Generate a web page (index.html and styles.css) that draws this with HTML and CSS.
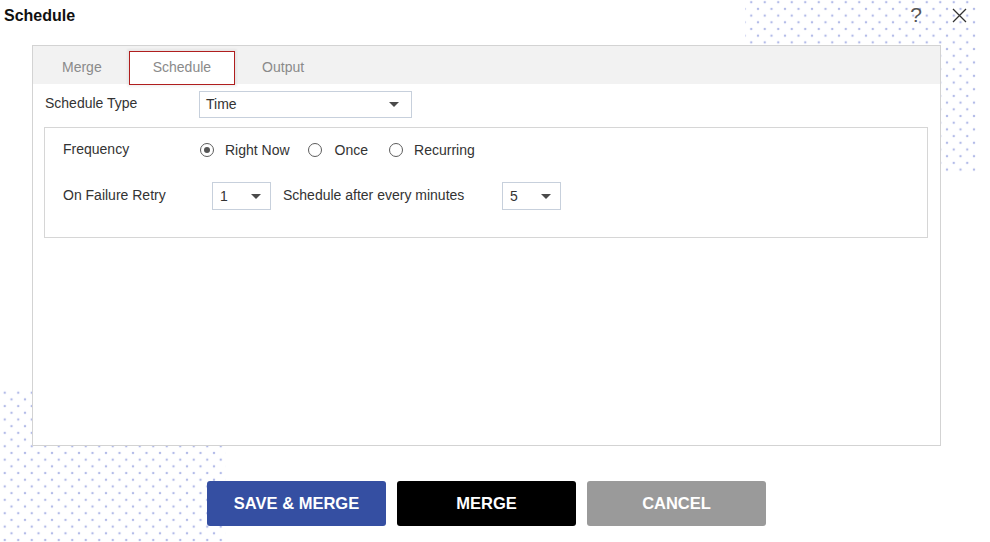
FILE: index.html
```html
<!DOCTYPE html>
<html lang="en">
<head>
<meta charset="utf-8">
<title>Schedule</title>
<link rel="stylesheet" href="styles.css">
</head>
<body>
<div class="dialog">
  <div class="deco deco-tr"></div>
  <div class="deco deco-bl"></div>

  <header class="titlebar">
    <h1 class="title">Schedule</h1>
    <div class="actions">
      <span class="help">?</span>
      <svg class="close" width="15" height="15" viewBox="0 0 15 15" aria-hidden="true">
        <path d="M1 1 L14 14 M14 1 L1 14" stroke="#333" stroke-width="1.3" fill="none"/>
      </svg>
    </div>
  </header>

  <section class="panel">
    <nav class="tabs">
      <div class="tab">Merge</div>
      <div class="tab active">Schedule</div>
      <div class="tab">Output</div>
    </nav>
    <div class="content">
      <div class="type-row">
        <span class="type-label">Schedule Type</span>
        <div class="select select-type"><span class="sel-text">Time</span><i class="caret"></i></div>
      </div>
      <div class="box">
        <div class="freq-row">
          <span class="freq-label">Frequency</span>
          <label class="radio"><span class="dot checked"></span><span class="rtext">Right Now</span></label>
          <label class="radio"><span class="dot"></span><span class="rtext">Once</span></label>
          <label class="radio"><span class="dot"></span><span class="rtext">Recurring</span></label>
        </div>
        <div class="retry-row">
          <span class="retry-label">On Failure Retry</span>
          <div class="select select-small"><span>1</span><i class="caret"></i></div>
          <span class="after-label">Schedule after every minutes</span>
          <div class="select select-small"><span>5</span><i class="caret"></i></div>
        </div>
      </div>
    </div>
  </section>

  <div class="buttons">
    <button class="btn btn-save">SAVE &amp; MERGE</button>
    <button class="btn btn-merge">MERGE</button>
    <button class="btn btn-cancel">CANCEL</button>
  </div>
</div>
</body>
</html>
```

FILE: styles.css
```css
* { box-sizing: border-box; }

html {
  background: #fff;
}

body {
  margin: 0;
  padding: 0;
  font-family: "Liberation Sans", Arial, sans-serif;
  font-size: 14px;
  color: #333;
  width: 990px;
  height: 542px;
  overflow: hidden;
}

.dialog {
  position: relative;
  z-index: 0;
  width: 990px;
  height: 542px;
}

.deco {
  position: absolute;
  z-index: 0;
  background-image:
    radial-gradient(circle, #b3bbe8 0.9px, rgba(179, 187, 232, 0) 1.6px),
    radial-gradient(circle, #b3bbe8 0.9px, rgba(179, 187, 232, 0) 1.6px);
  background-size: 13.5px 13.4px, 13.5px 13.4px;
}

.deco-tr {
  left: 745px;
  top: 0;
  width: 232px;
  height: 173px;
  background-position: -0.5px -4.5px, 6.25px 2.2px;
}

.deco-bl {
  left: 0;
  top: 388px;
  width: 226px;
  height: 154px;
  background-position: -2px -2px, 4.75px 4.7px;
}

/* title bar */
.titlebar {
  position: relative;
  z-index: 1;
  height: 45px;
  display: flex;
  justify-content: space-between;
  align-items: flex-start;
  padding: 7px 23px 0 4px;
}

.title {
  margin: 0;
  font-size: 16px;
  line-height: 18px;
  font-weight: bold;
  color: #111;
}

.actions {
  display: flex;
  align-items: center;
  gap: 30px;
  margin-top: -2px;
}

.help {
  font-size: 21px;
  line-height: 20px;
  color: #555;
  font-weight: normal;
}

.close {
  display: block;
}

/* panel */
.panel {
  position: relative;
  z-index: 1;
  margin-left: 32px;
  width: 909px;
  height: 401px;
  border: 1px solid #d3d3d3;
  background: #fff;
}

.tabs {
  display: flex;
  align-items: flex-start;
  gap: 3px;
  height: 38px;
  padding: 5px 0 0 5px;
  background: #f2f2f2;
}

.tab {
  height: 34px;
  line-height: 31px;
  padding: 0 23px;
  border: 1px solid transparent;
  color: #8a8a8a;
  font-size: 14px;
}

.tab.active {
  background: #fff;
  border-color: #b01e1e;
  box-shadow: 0 0 2px 2px rgba(0, 0, 0, 0.05);
  position: relative;
}

.content {
  padding: 7px 12px 0 11px;
}

.type-row {
  display: flex;
  align-items: center;
  height: 27px;
}

.type-label {
  width: 155px;
  padding-left: 1px;
  color: #333;
  margin-top: -3px;
}

.select {
  display: flex;
  align-items: center;
  justify-content: space-between;
  border: 1px solid #c7d0dc;
  background: #fff;
  color: #333;
}

.sel-text {
  margin-top: -2px;
}

.select-type {
  width: 213px;
  height: 27px;
  padding: 0 12px 0 6px;
}

.select-small {
  width: 59px;
  height: 28px;
  padding: 0 9px 0 7px;
}

.caret {
  display: block;
  width: 0;
  height: 0;
  border-left: 5px solid transparent;
  border-right: 5px solid transparent;
  border-top: 5px solid #4a4a4a;
}

.box {
  margin-top: 9px;
  height: 111px;
  border: 1px solid #d6d6d6;
  padding: 12px 0 0 18px;
}

.freq-row {
  display: flex;
  align-items: center;
  height: 20px;
}

.freq-label {
  width: 137px;
  color: #333;
  align-self: flex-start;
  line-height: 18px;
}

.radio {
  display: flex;
  align-items: center;
  margin-right: 18px;
}

.dot {
  width: 14px;
  height: 14px;
  border: 1px solid #5c5c5c;
  border-radius: 50%;
  margin-right: 11px;
  display: flex;
  align-items: center;
  justify-content: center;
}

.dot.checked::before {
  content: "";
  width: 6px;
  height: 6px;
  border-radius: 50%;
  background: #555;
}

.rtext {
  color: #333;
}

.radio:nth-of-type(2) .dot { margin-right: 13px; }
.radio:nth-of-type(2) { margin-right: 21px; }

.retry-row {
  display: flex;
  align-items: center;
  margin-top: 22px;
  height: 28px;
}

.retry-label {
  width: 149px;
  color: #333;
  margin-top: -2px;
}

.after-label {
  width: 231px;
  padding-left: 12px;
  color: #333;
  margin-top: -2px;
}

/* buttons */
.buttons {
  position: relative;
  z-index: 1;
  display: flex;
  gap: 11px;
  margin-top: 35px;
  padding-left: 207px;
}

.btn {
  width: 179px;
  height: 45px;
  border: none;
  border-radius: 3px;
  color: #fff;
  font-family: "Liberation Sans", Arial, sans-serif;
  font-weight: bold;
  font-size: 16.5px;
  padding: 0;
  cursor: pointer;
}

.btn-save { background: #354fa2; }
.btn-merge { background: #000; }
.btn-cancel { background: #9a9a9a; }
```
